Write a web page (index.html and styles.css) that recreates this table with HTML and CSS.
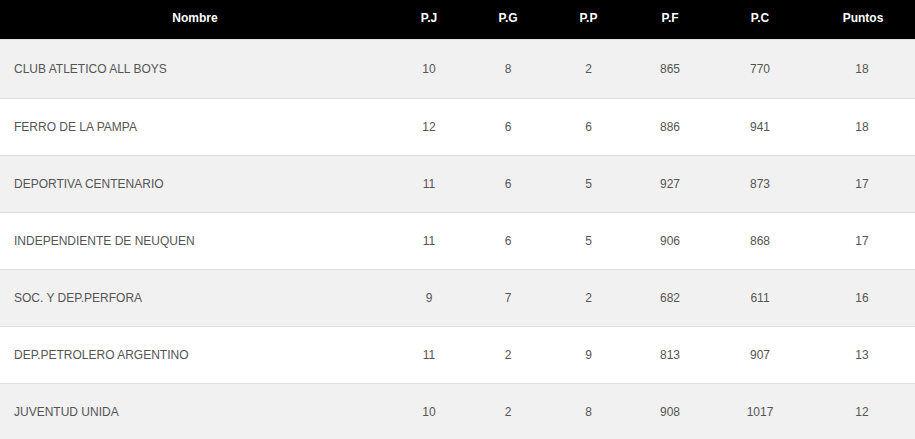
FILE: index.html
```html
<!DOCTYPE html>
<html lang="es">
<head>
<meta charset="utf-8">
<title>Posiciones</title>
<link rel="stylesheet" href="styles.css">
</head>
<body>
<table class="standings">
  <colgroup>
    <col class="c-name"><col class="c-pj"><col class="c-pg"><col class="c-pp"><col class="c-pf"><col class="c-pc"><col class="c-pts">
  </colgroup>
  <thead>
    <tr><th>Nombre</th><th>P.J</th><th>P.G</th><th>P.P</th><th>P.F</th><th>P.C</th><th>Puntos</th></tr>
  </thead>
  <tbody>
    <tr class="first"><td class="name">CLUB ATLETICO ALL BOYS</td><td>10</td><td>8</td><td>2</td><td>865</td><td>770</td><td>18</td></tr>
    <tr><td class="name">FERRO DE LA PAMPA</td><td>12</td><td>6</td><td>6</td><td>886</td><td>941</td><td>18</td></tr>
    <tr><td class="name">DEPORTIVA CENTENARIO</td><td>11</td><td>6</td><td>5</td><td>927</td><td>873</td><td>17</td></tr>
    <tr><td class="name">INDEPENDIENTE DE NEUQUEN</td><td>11</td><td>6</td><td>5</td><td>906</td><td>868</td><td>17</td></tr>
    <tr><td class="name">SOC. Y DEP.PERFORA</td><td>9</td><td>7</td><td>2</td><td>682</td><td>611</td><td>16</td></tr>
    <tr><td class="name">DEP.PETROLERO ARGENTINO</td><td>11</td><td>2</td><td>9</td><td>813</td><td>907</td><td>13</td></tr>
    <tr><td class="name">JUVENTUD UNIDA</td><td>10</td><td>2</td><td>8</td><td>908</td><td>1017</td><td>12</td></tr>
  </tbody>
</table>
</body>
</html>
```
FILE: styles.css
```css
html, body {
  margin: 0;
  padding: 0;
  background: #fff;
}
body {
  font-family: "Liberation Sans", Arial, sans-serif;
  font-size: 12px;
  color: #555;
}
.standings {
  width: 915px;
  border-collapse: collapse;
  table-layout: fixed;
}
.c-name { width: 390px; }
.c-pj { width: 78px; }
.c-pg { width: 80px; }
.c-pp { width: 81px; }
.c-pf { width: 82px; }
.c-pc { width: 98px; }
.c-pts { width: 106px; }
.standings th {
  background: #000;
  color: #fff;
  font-weight: bold;
  height: 35px;
  padding: 0 0 4px;
  text-align: center;
  vertical-align: middle;
}
.standings th:last-child {
  padding-left: 2px;
}
.standings td {
  height: 56px;
  padding: 0;
  text-align: center;
  vertical-align: middle;
  border-top: 1px solid #dddde2;
}
.standings tr.first td {
  height: 58px;
}
.standings td.name {
  text-align: left;
  padding-left: 14px;
}
.standings tbody tr:nth-child(odd) td {
  background: #f1f1f1;
}
```
